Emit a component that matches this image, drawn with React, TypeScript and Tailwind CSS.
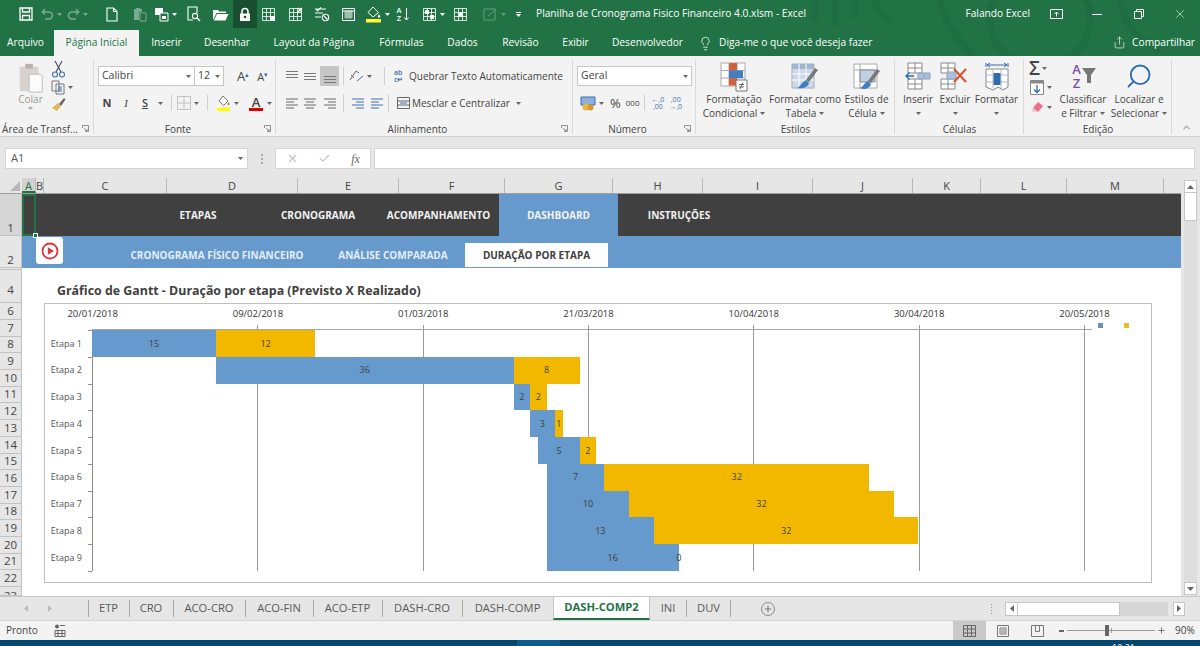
import type { ReactNode } from "react";
import { Search, X, Check, Lightbulb, Share, Plus, ChevronUp } from "lucide-react";

const PX_PER_DAY = 8.265;

const etapas = [
  { label: "Etapa 1", start: 0, prev: 15, real: 12 },
  { label: "Etapa 2", start: 15, prev: 36, real: 8 },
  { label: "Etapa 3", start: 51, prev: 2, real: 2 },
  { label: "Etapa 4", start: 53, prev: 3, real: 1 },
  { label: "Etapa 5", start: 54, prev: 5, real: 2 },
  { label: "Etapa 6", start: 55, prev: 7, real: 32 },
  { label: "Etapa 7", start: 55, prev: 10, real: 32 },
  { label: "Etapa 8", start: 55, prev: 13, real: 32 },
  { label: "Etapa 9", start: 55, prev: 16, real: 0 },
];

const datas = ["20/01/2018", "09/02/2018", "01/03/2018", "21/03/2018", "10/04/2018", "30/04/2018", "20/05/2018"];

function Caret({ className = "text-[#666]" }: { className?: string }) {
  return (
    <svg width="5" height="3" viewBox="0 0 5 3" className={className}>
      <path d="M0 0h5L2.5 3z" fill="currentColor" />
    </svg>
  );
}

function Launcher() {
  return (
    <svg width="7" height="7" viewBox="0 0 7 7" className="text-[#777]">
      <path d="M.5 3V.5h6v6H3.5M2 3l3 3M5 4v2H3" fill="none" stroke="currentColor" strokeWidth=".8" />
    </svg>
  );
}

function Slot({ w, children, className = "" }: { w: string; children: ReactNode; className?: string }) {
  return <div className={`${w} h-full flex items-center justify-center gap-[3px] ${className}`}>{children}</div>;
}

function SheetIco({ children }: { children?: ReactNode }) {
  return (
    <svg width="15" height="15" viewBox="0 0 15 15" fill="none" stroke="#fff" strokeWidth="1">
      <path d="M1.5 1.5h12v12h-12zM1.5 5.5h12M1.5 9.5h12M5.5 1.5v12M9.5 1.5v12" opacity=".8" />
      {children}
    </svg>
  );
}

function TitleBar() {
  return (
    <div className="relative h-[28px] flex items-center pl-[14px] text-white text-[10.2px]">
      <Slot w="w-[24px]">
        <svg width="14" height="14" viewBox="0 0 14 14" fill="none" stroke="#fff" strokeWidth="1.3">
          <path d="M1 1h12v12H1zM3.5 1v4h7V1M3.5 13V8.5h7V13" />
        </svg>
      </Slot>
      <Slot w="w-[26px]" className="opacity-40">
        <svg width="13" height="12" viewBox="0 0 13 12" fill="none" stroke="#fff" strokeWidth="1.4">
          <path d="M4 1 1.2 4 4 6.5M1.5 4H8a3.5 3.5 0 0 1 0 7H4" />
        </svg>
        <Caret className="text-white" />
      </Slot>
      <Slot w="w-[26px]" className="opacity-40">
        <svg width="13" height="12" viewBox="0 0 13 12" fill="none" stroke="#fff" strokeWidth="1.4">
          <path d="M9 1l2.8 3L9 6.5M11.5 4H5a3.5 3.5 0 0 0 0 7h4" />
        </svg>
        <Caret className="text-white" />
      </Slot>
      <Slot w="w-[24px]" className="ml-[10px]">
        <svg width="12" height="15" viewBox="0 0 12 15" fill="none" stroke="#fff" strokeWidth="1.1">
          <path d="M1 1h6.5L11 4.5V14H1zM7.5 1v3.5H11" />
        </svg>
      </Slot>
      <Slot w="w-[20px]" className="ml-[6px] opacity-40">
        <svg width="14" height="15" viewBox="0 0 14 15" fill="#fff">
          <path d="M1 2h2V1h4v1h2v3H6v8H1z" />
          <path d="M7 6h6v8H7z" fill="none" stroke="#fff" />
        </svg>
      </Slot>
      <Slot w="w-[25px]" className="ml-[3px]">
        <svg width="15" height="15" viewBox="0 0 15 15">
          <path d="M1 1h8v7H1z" fill="#fff" />
          <path d="M6 6h8v8H6z" fill="#217346" stroke="#fff" />
          <path d="M8 9h4v3H8z" fill="#fff" />
        </svg>
        <Caret className="text-white" />
      </Slot>
      <Slot w="w-[24px]" className="ml-[3px]">
        <svg width="15" height="16" viewBox="0 0 15 16" fill="none" stroke="#fff" strokeWidth="1.1">
          <path d="M11 7V1H2v13h5" />
          <circle cx="9" cy="10" r="2.6" />
          <path d="M11 12l3 3" strokeWidth="1.6" />
        </svg>
      </Slot>
      <Slot w="w-[24px]" className="ml-[3px]">
        <svg width="17" height="13" viewBox="0 0 17 13" fill="#fff">
          <path d="M1 2h5l1.5 1.5H14V5H4.5L1 12z" />
          <path d="M5 6h11.5L13.500 12.500H1.8z" />
        </svg>
      </Slot>
      <Slot w="w-[24px]" className="ml-[1px] bg-[#174f30]">
        <svg width="12" height="15" viewBox="0 0 12 15">
          <path d="M3 7V4.500a3 3 0 0 1 6 0V7" fill="none" stroke="#fff" strokeWidth="1.6" />
          <path d="M1 6.500h10V14H1z" fill="#fff" />
          <circle cx="6" cy="10" r="1.300" fill="#174f30" />
        </svg>
      </Slot>
      <Slot w="w-[23px]">
        <SheetIco>
          <path d="M9 9h5v5H9z" fill="#fff" stroke="none" />
        </SheetIco>
      </Slot>
      <Slot w="w-[24px]" className="ml-[3px]">
        <SheetIco>
          <path d="M10 1l4 4M14 1l-4 4" strokeWidth="1.3" />
        </SheetIco>
      </Slot>
      <Slot w="w-[24px]" className="ml-[3px]">
        <svg width="16" height="15" viewBox="0 0 16 15" fill="none" stroke="#fff" strokeWidth="1.1">
          <path d="M1 2h11M1 6h8M1 10h6M2 2l1.5 2L7 .5" />
          <circle cx="11.5" cy="10.5" r="3.2" />
          <path d="M9.5 8.5l4 4" />
        </svg>
      </Slot>
      <Slot w="w-[24px]" className="ml-[2px]">
        <svg width="15" height="15" viewBox="0 0 15 15" fill="none" stroke="#fff">
          <path d="M1.5 1.5h12v12h-12z" />
          <path d="M4 4h7v7H4z" fill="#fff" opacity=".55" />
          <path d="M1.5 4h12" />
        </svg>
      </Slot>
      <Slot w="w-[29px]" className="ml-[3px]">
        <svg width="17" height="17" viewBox="0 0 17 17">
          <path d="M8 1l5.500 5.500L8 11 3 6.500z" fill="none" stroke="#fff" />
          <path d="M14 8l1.200 2.400a1.200 1.200 0 1 1-2.400 0z" fill="#fff" />
          <path d="M1 13h15v3.500H1z" fill="#ffff3c" />
        </svg>
        <Caret className="text-white" />
      </Slot>
      <Slot w="w-[22px]">
        <span className="text-[7.5px] leading-[8px] font-semibold text-center">A<br />Z</span>
        <svg width="5" height="13" viewBox="0 0 5 13" fill="none" stroke="#fff">
          <path d="M2.500 0v12M.5 9.500l2 2.500 2-2.500" />
        </svg>
      </Slot>
      <Slot w="w-[30px]" className="ml-[4px]">
        <SheetIco>
          <path d="M3 3h4v4H3zM8 8h4v4H8z" fill="#fff" stroke="none" />
        </SheetIco>
        <Caret className="text-white" />
      </Slot>
      <Slot w="w-[24px]">
        <SheetIco>
          <path d="M5.500 5.500h4v4h-4z" fill="#fff" stroke="none" />
        </SheetIco>
      </Slot>
      <Slot w="w-[32px]" className="ml-[6px] opacity-30">
        <svg width="15" height="13" viewBox="0 0 15 13" fill="none" stroke="#fff">
          <path d="M1 1h11v11H1zM5 8l8-7" />
        </svg>
        <Caret className="text-white" />
      </Slot>
      <Slot w="w-[16px]">
        <div className="flex flex-col items-center gap-[1px]">
          <div className="w-[5px] h-px bg-white" />
          <Caret className="text-white" />
        </div>
      </Slot>
      <span className="ml-[10px] whitespace-nowrap">Planilha de Cronograma Fisico Financeiro 4.0.xlsm  -  Excel</span>
      <div className="ml-auto flex items-center h-full">
        <span className="mr-[7px]">Falando Excel</span>
        <Slot w="w-[39px]">
          <svg width="13" height="10" viewBox="0 0 13 10" fill="none" stroke="#fff">
            <path d="M.5.5h12v9H.5zM6.500 7.500V3M4.500 5l2-2 2 2" />
          </svg>
        </Slot>
        <Slot w="w-[42px]">
          <div className="w-[10px] h-px bg-white" />
        </Slot>
        <Slot w="w-[42px]">
          <svg width="10" height="10" viewBox="0 0 10 10" fill="none" stroke="#fff">
            <path d="M.5 2.500h7v7h-7zM2.500 2.500v-2h7v7h-2" />
          </svg>
        </Slot>
        <Slot w="w-[40px]">
          <X size={14} strokeWidth={1} className="text-white" />
        </Slot>
      </div>
    </div>
  );
}

function TabsRow() {
  return (
    <div className="relative h-[28px] flex items-center pt-[2px] text-[10.2px] text-white">
      <div className="w-[51px] mr-[3px] text-center">Arquivo</div>
      <div className="w-[85px] h-[26px] -mb-[0px] self-end bg-[#f3f3f3] text-[#217346] flex items-center justify-center">Página Inicial</div>
      <div className="w-[55px] text-center">Inserir</div>
      <div className="w-[66px] text-center">Desenhar</div>
      <div className="w-[108px] text-center">Layout da Página</div>
      <div className="w-[67px] text-center">Fórmulas</div>
      <div className="w-[55px] text-center">Dados</div>
      <div className="w-[61px] text-center">Revisão</div>
      <div className="w-[49px] text-center">Exibir</div>
      <div className="w-[95px] text-center">Desenvolvedor</div>
      <Lightbulb size={15} strokeWidth={1.2} className="ml-[3px] text-white" />
      <span className="ml-[6px] whitespace-nowrap">Diga-me o que você deseja fazer</span>
      <div className="ml-auto mr-[5px] flex items-center gap-[6px]">
        <Share size={13} strokeWidth={1.2} />
        <span>Compartilhar</span>
      </div>
    </div>
  );
}

function Group({ w, label, launcher, children }: { w: string; label: string; launcher?: boolean; children: ReactNode }) {
  return (
    <div className={`${w} h-full relative flex flex-col shrink-0 after:absolute after:right-0 after:top-[4px] after:bottom-[2px] after:w-px after:bg-[#d9d9d9]`}>
      <div className="flex-1 min-h-0">{children}</div>
      <div className={`h-[13px] flex items-center justify-center text-[10px] text-[#444] whitespace-nowrap relative ${launcher ? "pr-[14px]" : ""}`}>
        {label}
        {launcher && (
          <span className="absolute right-[5px] top-[2px]">
            <Launcher />
          </span>
        )}
      </div>
    </div>
  );
}

function Lines({ align, stroke = "#666" }: { align: "l" | "c" | "r"; stroke?: string }) {
  const d =
    align === "l"
      ? "M1 2h12M1 5h8M1 8h12M1 11h8"
      : align === "c"
        ? "M1 2h12M3 5h8M1 8h12M3 11h8"
        : "M1 2h12M5 5h8M1 8h12M5 11h8";
  return (
    <svg width="14" height="13" viewBox="0 0 14 13" fill="none" stroke={stroke}>
      <path d={d} />
    </svg>
  );
}

function VLines({ pos }: { pos: "t" | "m" | "b" }) {
  const y = pos === "t" ? 1.5 : pos === "m" ? 3.5 : 6.5;
  return (
    <svg width="14" height="13" viewBox="0 0 14 13" fill="none" stroke="#777">
      <path d={`M1 ${y}h12M1 ${y + 3}h12M1 ${y + 6}h12`} />
    </svg>
  );
}

function Select({ w, text }: { w: string; text: string }) {
  return (
    <div className={`${w} h-[20px] bg-white border border-[#c6c6c6] flex items-center justify-between px-[3px] text-[10.5px] text-[#444]`}>
      <span>{text}</span>
      <Caret />
    </div>
  );
}

function BigButton({ w, icon, lines }: { w: string; icon: ReactNode; lines: ReactNode[] }) {
  return (
    <div className={`${w} shrink-0 flex flex-col items-center pt-[6px]`}>
      <div className="h-[30px] flex items-start justify-center">{icon}</div>
      {lines.map((l, i) => (
        <div key={i} className="h-[14px] flex items-center gap-[3px] text-[10px] text-[#444] whitespace-nowrap">
          {l}
        </div>
      ))}
    </div>
  );
}

function Ribbon() {
  return (
    <div className="h-[81px] bg-[#f3f3f3] border-b border-[#d2d2d2] flex relative">
      <Group w="w-[94px]" label="Área de Transf..." launcher>
        <div className="flex h-full">
          <div className="w-[50px] flex flex-col items-center pt-[6px] pl-[11px]">
            <svg width="26" height="31" viewBox="0 0 26 33">
              <path d="M1 5h20v26H1z" fill="#d9d3cf" />
              <path d="M7 2h8v5H7z" fill="#b9b1ad" />
              <path d="M11 13h12l2 2v17H11z" fill="#fbfbfb" stroke="#bbb" />
            </svg>
            <span className="text-[10px] leading-[13px] text-[#999]">Colar</span>
            <Caret className="text-[#aaa] mt-[1px]" />
          </div>
          <div className="flex flex-col items-start pl-[1px] pt-[4px] gap-[2px]">
            <svg width="15" height="18" viewBox="0 0 15 18" fill="none" stroke="#446" strokeWidth="1.1">
              <path d="M4 1l6 11M11 1L5 12" />
              <circle cx="4" cy="14.5" r="2.5" stroke="#3a6fb0" />
              <circle cx="11" cy="14.5" r="2.5" stroke="#3a6fb0" />
            </svg>
            <div className="flex items-center gap-[3px]">
              <svg width="14" height="15" viewBox="0 0 14 15" fill="none" stroke="#777">
                <path d="M1 1h7v10H1zM5 4h8v10H5z" fill="#f3f3f3" />
                <path d="M7 7h4M7 9h4M7 11h4" stroke="#3a6fb0" />
              </svg>
              <Caret />
            </div>
            <svg width="15" height="15" viewBox="0 0 15 15">
              <path d="M8 7l5-6 1.500 1.500L10 9z" fill="#666" />
              <path d="M1 11l6-5 3 3-4 5z" fill="#e0b65a" />
            </svg>
          </div>
        </div>
      </Group>

      <Group w="w-[182px]" label="Fonte" launcher>
        <div className="pt-[10px] pl-[4px]">
          <div className="flex items-center h-[20px] text-[#444]">
            <Select w="w-[97px]" text="Calibri" />
            <Select w="w-[30px] -ml-px" text="12" />
            <span className="ml-[13px] text-[13px] leading-none">A<sup className="text-[7px] text-[#3a6fb0]">▴</sup></span>
            <span className="ml-[8px] text-[11px] leading-none">A<sup className="text-[7px] text-[#3a6fb0]">▾</sup></span>
          </div>
          <div className="flex items-center h-[20px] mt-[7px] text-[11px] text-[#444]">
            <span className="w-[18px] text-center font-bold">N</span>
            <span className="w-[20px] text-center italic font-['Liberation_Serif',serif]">I</span>
            <span className="w-[18px] text-center underline font-semibold">S</span>
            <span className="w-[12px] flex justify-center"><Caret /></span>
            <div className="w-px h-[16px] bg-[#d0d0d0] mx-[5px]" />
            <svg width="14" height="14" viewBox="0 0 14 14" fill="none" stroke="#999" strokeDasharray="1 1">
              <path d="M.5.5h13v13H.5zM.5 7h13M7 .5v13" />
            </svg>
            <span className="ml-[3px]"><Caret /></span>
            <div className="w-px h-[16px] bg-[#d0d0d0] mx-[8px]" />
            <svg width="15" height="16" viewBox="0 0 15 16">
              <path d="M7 1l5 5-4.500 4.500L3 6z" fill="#fff" stroke="#777" />
              <path d="M12.500 7l1 2a1 1 0 1 1-2 0z" fill="#777" />
              <path d="M1 12.500h13V16H1z" fill="#ffff00" />
            </svg>
            <span className="ml-[3px]"><Caret /></span>
            <div className="ml-[10px] w-[14px] flex flex-col items-center">
              <span className="text-[13px] leading-[12px] font-semibold">A</span>
              <div className="w-[14px] h-[3px] bg-[#e00000]" />
            </div>
            <span className="ml-[4px]"><Caret /></span>
          </div>
        </div>
      </Group>

      <Group w="w-[297px]" label="Alinhamento" launcher>
        <div className="pt-[10px] pl-[7px] text-[10px] text-[#444]">
          <div className="flex items-center h-[20px]">
            <div className="w-[18px] flex justify-center"><VLines pos="t" /></div>
            <div className="w-[18px] flex justify-center"><VLines pos="m" /></div>
            <div className="ml-[1px] w-[19px] h-[20px] bg-[#c6c6c6] flex justify-center items-center"><VLines pos="b" /></div>
            <div className="w-px h-[18px] bg-[#d0d0d0] ml-[4px] mr-[2px]" />
            <svg width="16" height="14" viewBox="0 0 16 14" fill="none" stroke="#666" className="ml-[2px]">
              <path d="M2 11L8 2l3 2M3 6l3 3" />
              <path d="M9 12l6-5" stroke="#3a6fb0" />
            </svg>
            <span className="ml-[3px]"><Caret /></span>
            <div className="w-px h-[18px] bg-[#d0d0d0] ml-[12px]" />
            <span className="ml-[9px] w-[12px] text-[7px] leading-[7px] text-[#3a6fb0] font-semibold whitespace-nowrap">ab<br />c↵</span>
            <span className="ml-[3px] whitespace-nowrap">Quebrar Texto Automaticamente</span>
          </div>
          <div className="flex items-center h-[20px] mt-[7px]">
            <div className="w-[18px] flex justify-center"><Lines align="l" /></div>
            <div className="w-[18px] flex justify-center"><Lines align="c" /></div>
            <div className="ml-[1px] w-[19px] flex justify-center"><Lines align="r" /></div>
            <div className="w-px h-[18px] bg-[#d0d0d0] ml-[4px] mr-[4px]" />
            <div className="w-[19px] flex justify-center"><Lines align="r" stroke="#3a6fb0" /></div>
            <div className="w-[19px] flex justify-center"><Lines align="l" stroke="#3a6fb0" /></div>
            <div className="w-px h-[18px] bg-[#d0d0d0] ml-[2px]" />
            <svg width="13" height="12" viewBox="0 0 13 12" fill="none" stroke="#666" className="ml-[8px]">
              <path d="M.5.5h12v11H.5zM.5 4h12M.5 8h12" />
              <path d="M3 6h7" stroke="#3a6fb0" />
            </svg>
            <span className="ml-[2px] whitespace-nowrap">Mesclar e Centralizar</span>
            <span className="ml-[6px]"><Caret /></span>
          </div>
        </div>
      </Group>

      <Group w="w-[123px]" label="Número" launcher>
        <div className="pt-[10px] pl-[4px] text-[#444]">
          <Select w="w-[115px]" text="Geral" />
          <div className="flex items-center h-[20px] mt-[7px]">
            <svg width="16" height="15" viewBox="0 0 16 15" className="ml-[3px]">
              <path d="M1 1h14v8H1z" fill="#8fb1d8" stroke="#3a6fb0" />
              <circle cx="6" cy="11" r="3.500" fill="#e8b64c" />
              <circle cx="10.500" cy="11.500" r="3" fill="#d89a30" />
            </svg>
            <span className="ml-[3px]"><Caret /></span>
            <span className="ml-[6px] text-[13px] leading-none">%</span>
            <span className="ml-[5px] text-[8px]">000</span>
            <div className="w-px h-[16px] bg-[#d0d0d0] ml-[5px]" />
            <span className="ml-[6px] text-[7px] leading-[7px] text-[#3a6fb0] text-center">←,0<br />,00</span>
            <span className="ml-[5px] text-[7px] leading-[7px] text-[#3a6fb0] text-center">,00<br />→,0</span>
          </div>
        </div>
      </Group>

      <Group w="w-[199px]" label="Estilos">
        <div className="flex">
          <BigButton
            w="w-[76px]"
            lines={["Formatação", <>Condicional <Caret key="c" /></>]}
            icon={
              <svg width="28" height="30" viewBox="0 0 28 30" fill="none">
                <path d="M1 1h24v23H1zM9 1v23M17 1v23M1 8.500h24M1 16h24" stroke="#aaa" fill="#fff" />
                <path d="M9 1h8v7.500H9z" fill="#d2603c" />
                <path d="M9 8.500h14V16H9z" fill="#3f7fc1" />
                <path d="M9 16h8v7.500H9z" fill="#d2603c" />
                <path d="M16 18h11v11H16z" fill="#fff" stroke="#777" />
                <path d="M19 22.500h5M19 25h5M23 20.500l-3 6.500" stroke="#444" strokeWidth=".8" />
              </svg>
            }
          />
          <BigButton
            w="w-[66px]"
            lines={["Formatar como", <>Tabela <Caret key="c" /></>]}
            icon={
              <svg width="28" height="30" viewBox="0 0 28 30" fill="none">
                <path d="M1 2h22v24H1z" fill="#cdd9e8" stroke="#aaa" />
                <path d="M1 2h22v5H1z" fill="#9fb6d2" />
                <path d="M1 12h22M1 18h22M8 2v24M15 2v24" stroke="#fff" />
                <path d="M27 8l-9 12-3-2 9-12z" fill="#777" />
                <path d="M15 18l3 3c-1 5-8 6-12 5 3-1 4-5 9-8z" fill="#3f7fc1" />
              </svg>
            }
          />
          <BigButton
            w="w-[57px]"
            lines={["Estilos de", <>Célula <Caret key="c" /></>]}
            icon={
              <svg width="28" height="30" viewBox="0 0 28 30" fill="none">
                <path d="M1 2h23v24H1zM7 2v24M1 8h23" stroke="#aaa" fill="#fff" />
                <path d="M7 8h15v12H7z" fill="#bfd0e5" stroke="#888" />
                <path d="M27 9l-9 12-3-2 9-12z" fill="#777" />
                <path d="M15 19l3 3c-1 5-8 6-11 4 3-1 3-4 8-7z" fill="#3f7fc1" />
              </svg>
            }
          />
        </div>
      </Group>

      <Group w="w-[129px]" label="Células">
        <div className="flex">
          <BigButton
            w="w-[46px]"
            lines={["Inserir", <Caret key="c" />]}
            icon={
              <svg width="26" height="28" viewBox="0 0 26 28" fill="none">
                <path d="M3 1h14v10H3zM3 6h14M10 1v10M3 17h14v10H3zM3 22h14M10 17v10" stroke="#888" fill="#fff" />
                <path d="M13 11h12v6H13zM19 11v6" fill="#a8c0dc" stroke="#8aa5c5" />
                <path d="M1 14h8M4.500 10.500 1 14l3.500 3.500" stroke="#2d6cb0" strokeWidth="1.4" />
              </svg>
            }
          />
          <BigButton
            w="w-[28px]"
            lines={["Excluir", <Caret key="c" />]}
            icon={
              <svg width="30" height="28" viewBox="0 0 30 28" fill="none" className="-ml-[2px]">
                <path d="M2 1h14v10H2zM2 6h14M9 1v10M2 17h14v10H2zM2 22h14M9 17v10" stroke="#888" fill="#fff" />
                <path d="M8 10h9v7H8z" fill="#a8c0dc" stroke="#8aa5c5" />
                <path d="M15 7l12 13M27 7L15 20" stroke="#d9512c" strokeWidth="2" />
              </svg>
            }
          />
          <BigButton
            w="w-[55px]"
            lines={["Formatar", <Caret key="c" />]}
            icon={
              <svg width="26" height="30" viewBox="0 0 26 30" fill="none">
                <path d="M2 7h22v18l-5 3-5-3-5 3-7-3z" stroke="#888" fill="#fff" />
                <path d="M9 7v19M17 7v19M2 13h22M2 20h22" stroke="#bbb" />
                <path d="M9.500 11h7v12h-7z" fill="#2d6cb0" />
                <path d="M2 1v4M24 1v4M3 3h20M6 1 3 3l3 2M20 1l3 2-3 2" stroke="#2d6cb0" />
              </svg>
            }
          />
        </div>
      </Group>

      <Group w="w-[148px]" label="Edição">
        <div className="flex">
          <div className="w-[28px] pt-[4px] pl-[5px] flex flex-col gap-[3px]">
            <div className="h-[16px] flex items-center gap-[2px]">
              <span className="text-[19px] leading-none font-semibold text-[#444]">Σ</span>
              <Caret />
            </div>
            <div className="h-[16px] flex items-center gap-[3px] pl-[1px]">
              <svg width="14" height="15" viewBox="0 0 14 15" fill="none">
                <path d="M.5.500h13v14H.5z" stroke="#888" fill="#fff" />
                <path d="M.5.500h13v3H.5z" fill="#888" />
                <path d="M7 5v7M4 9.500l3 3 3-3" stroke="#2d6cb0" strokeWidth="1.3" />
              </svg>
              <Caret />
            </div>
            <div className="h-[16px] flex items-center gap-[3px] mt-[1px] pl-[1px]">
              <svg width="14" height="12" viewBox="0 0 14 12">
                <path d="M8 1l5 4-5 6-5-4z" fill="#ef6f86" />
                <path d="M3 7l3.500 3-1 1H3L1 9z" fill="#f6c8d0" />
              </svg>
              <Caret />
            </div>
          </div>
          <BigButton
            w="w-[62px]"
            lines={["Classificar", <>e Filtrar <Caret key="c" /></>]}
            icon={
              <div className="flex items-start ml-[3px]">
                <span className="text-[13px] leading-[14px] font-semibold text-center text-[#7a4fa3]">A<br />Z</span>
                <svg width="16" height="22" viewBox="0 0 16 22" className="mt-[4px]">
                  <path d="M1 2h14L10 9v8H6V9z" fill="#777" />
                </svg>
              </div>
            }
          />
          <BigButton
            w="w-[50px]"
            lines={["Localizar e", <>Selecionar <Caret key="c" /></>]}
            icon={<Search size={28} strokeWidth={1.6} className="text-[#2d6cb0] -scale-x-100" />}
          />
        </div>
      </Group>

      <ChevronUp size={11} className="absolute right-[8px] bottom-[3px] text-[#666]" />
    </div>
  );
}

function FormulaBar() {
  return (
    <div className="h-[41px] flex items-center pl-[5px] pr-[5px] pt-[2px]">
      <div className="w-[243px] h-[21px] bg-white border border-[#d4d4d4] flex items-center justify-between pl-[5px] pr-[4px] text-[11px] text-[#555]">
        <span>A1</span>
        <Caret />
      </div>
      <div className="w-[27px] flex flex-col items-center gap-[2px]">
        <div className="w-[2px] h-[2px] bg-[#aaa]" />
        <div className="w-[2px] h-[2px] bg-[#aaa]" />
        <div className="w-[2px] h-[2px] bg-[#aaa]" />
      </div>
      <div className="w-[96px] h-[21px] bg-white border border-[#d4d4d4] flex items-center text-[#c4c4c4]">
        <div className="w-[32px] flex justify-center"><X size={13} /></div>
        <div className="w-[33px] flex justify-center"><Check size={13} /></div>
        <div className="w-[29px] text-center text-[12px] italic text-[#666] font-['Liberation_Serif',serif]">fx</div>
      </div>
      <div className="flex-1 h-[21px] ml-[3px] bg-white border border-[#d4d4d4]" />
    </div>
  );
}

const colunas = [
  { l: "A", w: "w-[14px]", sel: true },
  { l: "B", w: "w-[8px]" },
  { l: "C", w: "w-[123px]" },
  { l: "D", w: "w-[131px]" },
  { l: "E", w: "w-[101px]" },
  { l: "F", w: "w-[106px]" },
  { l: "G", w: "w-[108px]" },
  { l: "H", w: "w-[90px]" },
  { l: "I", w: "w-[110px]" },
  { l: "J", w: "w-[100px]" },
  { l: "K", w: "w-[68px]" },
  { l: "L", w: "w-[86px]" },
  { l: "M", w: "w-[97px]" },
];

function ColumnHeader() {
  return (
    <div className="h-[16px] flex border-b border-[#9f9f9f] text-[11px] text-[#444] leading-[15px]">
      <div className="w-[22px] flex items-end justify-end pr-[2px] pb-[2px]">
        <svg width="10" height="10" viewBox="0 0 10 10">
          <path d="M10 0v10H0z" fill="#b8b8b8" />
        </svg>
      </div>
      {colunas.map((c) => (
        <div key={c.l} className={`${c.w} text-center border-r border-[#b9b9b9] ${c.sel ? "bg-[#d2d2d2] border-b-2 border-b-[#217346] text-[#217346]" : ""}`}>
          {c.l}
        </div>
      ))}
    </div>
  );
}

const linhas = [
  { l: "1", h: "h-[42px] items-end leading-[14px] bg-[#d6d6d6]" },
  { l: "2", h: "h-[32px] items-end leading-[14px]" },
  { l: "", h: "h-[2px]" },
  { l: "4", h: "h-[33px] items-end pb-[4px] leading-[16px]" },
  { l: "6", h: "h-[17px] items-end leading-[16px]" },
  ...["7", "8", "9", "10", "11", "12", "13", "14", "15", "16", "17", "18", "19", "20", "21", "22"].map((l) => ({
    l,
    h: "h-[16.7px] items-end leading-[16px]",
  })),
  { l: "23", h: "h-[9px] items-start pt-[1px] leading-[16px]" },
];

function RowHeader() {
  return (
    <div className="w-[22px] shrink-0 overflow-hidden">
      {linhas.map((r, i) => (
        <div key={i} className={`${r.h} flex justify-center overflow-hidden border-b border-r border-[#c2c2c2] text-[11.5px] text-[#444]`}>
          {r.l}
        </div>
      ))}
    </div>
  );
}

function Gantt() {
  const grades = [1, 2, 3, 4, 5, 6];
  return (
    <div className="relative ml-[22px] w-[1108px] h-[280px] border border-[#bfbfbf] bg-white">
      <div className="flex h-[21px] items-center -ml-[35px] text-[9.5px] text-[#333]">
        {datas.map((d) => (
          <div key={d} className="w-[165.3px] shrink-0 text-center">
            {d}
          </div>
        ))}
      </div>
      <div className="absolute left-[1053px] top-[19px] w-[5px] h-[5px] bg-[#6b8fc0]" />
      <div className="absolute left-[1079px] top-[19px] w-[5px] h-[5px] bg-[#e9bd2f]" />
      <div className="relative mt-[5px] h-[241px]">
        <div className="absolute left-[47px] -top-px w-[1000px] h-px bg-[#a6a6a6]" />
        <div className="absolute left-[47px] top-0 w-px h-full bg-[#8c8c8c]" />
        {grades.map((g) => (
          <div key={g} className="absolute -top-[5px] bottom-0 w-px bg-[#9a9a9a]" style={{ left: 47 + g * 165.3 }} />
        ))}
        {Array.from({ length: 10 }, (_, i) => (
          <div key={i} className="absolute left-[43px] w-[4px] h-px bg-[#8c8c8c]" style={{ top: i * 26.78 }} />
        ))}
        {etapas.map((e) => (
          <div key={e.label} className="relative h-[26.78px] flex items-center text-[9px] text-[#404040]">
            <div className="w-[37px] text-right text-[#555] whitespace-nowrap">{e.label}</div>
            <div className="h-full flex" style={{ marginLeft: 10 + e.start * PX_PER_DAY }}>
              <div className="h-full bg-[#6699cc] flex items-center justify-center" style={{ width: e.prev * PX_PER_DAY }}>
                {e.prev}
              </div>
              <div className="h-full bg-[#f2b800] flex items-center justify-center" style={{ width: e.real * PX_PER_DAY }}>
                {e.real}
              </div>
            </div>
          </div>
        ))}
      </div>
    </div>
  );
}

function Sheet() {
  return (
    <div className="relative flex-1 bg-white overflow-hidden">
      <div className="h-[42px] bg-[#404040] flex text-[10px] font-bold text-[#f2f2f2]">
        <div className="w-[116px]" />
        <div className="w-[120px] flex items-center justify-center">ETAPAS</div>
        <div className="w-[120px] flex items-center justify-center">CRONOGRAMA</div>
        <div className="w-[121px] flex items-center justify-center">ACOMPANHAMENTO</div>
        <div className="w-[119px] bg-[#6699cc] flex items-center justify-center">DASHBOARD</div>
        <div className="w-[122px] flex items-center justify-center">INSTRUÇÕES</div>
      </div>
      <div className="h-[32px] bg-[#6699cc] flex text-[10px] font-bold text-[#e3edf7]">
        <div className="w-[88px]" />
        <div className="w-[214px] mt-[7px] flex items-center justify-center">CRONOGRAMA FÍSICO FINANCEIRO</div>
        <div className="w-[138px] mt-[7px] flex items-center justify-center">ANÁLISE COMPARADA</div>
        <div className="w-[143px] ml-[3px] mt-[7px] mb-[1px] bg-white text-[#404040] flex items-center justify-center">DURAÇÃO POR ETAPA</div>
      </div>
      <div className="h-[35px] pl-[35px] pt-[14px] text-[12.4px] leading-[18px] font-bold text-[#404040]">
        Gráfico de Gantt - Duração por etapa (Previsto X Realizado)
      </div>
      <Gantt />

      {/* selecao da celula A1 */}
      <div className="absolute left-0 top-0 w-[14px] h-[42px] border-2 border-[#217346]" />
      <div className="absolute left-[11px] top-[39px] w-[5px] h-[5px] bg-[#217346] border border-white" />
      {/* botao de video */}
      <div className="absolute left-[14px] top-[43px] w-[27px] h-[27px] bg-white rounded-[3px] flex items-center justify-center">
        <svg width="18" height="18" viewBox="0 0 18 18" fill="none">
          <circle cx="9" cy="9" r="7.500" stroke="#e0353a" strokeWidth="1.8" />
          <path d="M6.800 5.200 13 9l-6.200 3.800z" fill="#e0353a" />
        </svg>
      </div>
    </div>
  );
}

function VScroll() {
  return (
    <div className="w-[19px] shrink-0 pl-[3px] pr-[3px] pt-[2px] pb-[1px] flex flex-col">
      <div className="h-[13px] bg-white border border-[#c6c6c6] flex items-center justify-center">
        <svg width="7" height="4" viewBox="0 0 7 4"><path d="M0 4h7L3.500 0z" fill="#666" /></svg>
      </div>
      <div className="flex-1 bg-[#dedede] flex flex-col">
        <div className="h-[28px] bg-white border-x border-b border-[#c6c6c6]" />
      </div>
      <div className="h-[13px] bg-white border border-[#c6c6c6] flex items-center justify-center">
        <svg width="7" height="4" viewBox="0 0 7 4"><path d="M0 0h7L3.500 4z" fill="#666" /></svg>
      </div>
    </div>
  );
}

const abas = [
  { t: "ETP", w: "w-[41px]" },
  { t: "CRO", w: "w-[44px]" },
  { t: "ACO-CRO", w: "w-[72px]" },
  { t: "ACO-FIN", w: "w-[68px]" },
  { t: "ACO-ETP", w: "w-[69px]" },
  { t: "DASH-CRO", w: "w-[80px]" },
  { t: "DASH-COMP", w: "w-[91px]" },
];

function SheetTabs() {
  return (
    <div className="h-[24px] bg-[#e6e6e6] border-t border-[#c6c6c6] flex items-stretch text-[11.2px] text-[#595959]">
      <div className="w-[88px] flex items-center text-[#bdbdbd]">
        <svg width="4" height="7" viewBox="0 0 4 7" className="ml-[24px]"><path d="M4 0v7L0 3.500z" fill="currentColor" /></svg>
        <svg width="4" height="7" viewBox="0 0 4 7" className="ml-[20px]"><path d="M0 0v7l4-3.500z" fill="currentColor" /></svg>
      </div>
      {abas.map((a) => (
        <div key={a.t} className={`${a.w} flex items-center justify-center relative`}>
          <div className="absolute left-0 top-[3px] bottom-[3px] w-px bg-[#a8a8a8]" />
          {a.t}
        </div>
      ))}
      <div className="w-[97px] bg-white border-x border-[#c6c6c6] border-b-2 border-b-[#217346] flex items-center justify-center font-bold text-[#217346] whitespace-nowrap">
        DASH-COMP2
      </div>
      <div className="w-[36px] flex items-center justify-center">INI</div>
      <div className="w-[45px] flex items-center justify-center border-x border-[#a8a8a8] my-[3px]">DUV</div>
      <div className="ml-[30px] w-[14px] h-[14px] self-center rounded-full border border-[#888] flex items-center justify-center">
        <Plus size={10} strokeWidth={2} className="text-[#666]" />
      </div>
      <div className="ml-[216px] w-[2px] self-center flex flex-col gap-[2px]">
        <div className="w-px h-px bg-[#999]" />
        <div className="w-px h-px bg-[#999]" />
        <div className="w-px h-px bg-[#999]" />
        <div className="w-px h-px bg-[#999]" />
      </div>
      <div className="ml-[12px] h-[14px] self-center flex">
        <div className="w-[13px] bg-white border border-[#c6c6c6] flex items-center justify-center">
          <svg width="4" height="7" viewBox="0 0 4 7"><path d="M4 0v7L0 3.500z" fill="#666" /></svg>
        </div>
        <div className="w-[102px] bg-white border-y border-r border-[#c6c6c6]" />
        <div className="w-[48px] bg-[#d6d6d6]" />
        <div className="ml-[5px] w-[12px] bg-white border border-[#c6c6c6] flex items-center justify-center">
          <svg width="4" height="7" viewBox="0 0 4 7"><path d="M0 0v7l4-3.500z" fill="#666" /></svg>
        </div>
      </div>
    </div>
  );
}

function StatusBar() {
  return (
    <div className="h-[20px] bg-[#f3f3f3] border-t border-[#d4d4d4] flex items-center pl-[6px] text-[10px] text-[#444]">
      <span>Pronto</span>
      <svg width="12" height="13" viewBox="0 0 12 13" className="ml-[16px]" fill="none" stroke="#666">
        <circle cx="3" cy="2.500" r="2" fill="#666" stroke="none" />
        <path d="M6 1.500h5" />
        <path d="M1 6.500h10v6H1zM1 9.500h10M4 6.500v6M8 6.500v6" />
      </svg>
      <div className="ml-auto flex items-center h-full">
        <div className="w-[33px] h-full bg-[#c9c9c9] flex items-center justify-center">
          <svg width="13" height="12" viewBox="0 0 13 12" fill="none" stroke="#666">
            <path d="M.5.500h12v11H.5zM.5 4h12M.5 8h12M4.500.500v11M8.500.500v11" />
          </svg>
        </div>
        <div className="w-[34px] flex justify-center">
          <svg width="12" height="12" viewBox="0 0 12 12" fill="none" stroke="#777">
            <path d="M.5.500h11v11H.5zM3 3h6v6H3zM4 5h4M4 7h4" />
          </svg>
        </div>
        <div className="w-[34px] flex justify-center">
          <svg width="13" height="12" viewBox="0 0 13 12" fill="none" stroke="#777">
            <path d="M.5.500h12v11H.5zM4.500.500v6h4v-6" />
          </svg>
        </div>
        <div className="w-[5px] h-[2px] ml-[5px] bg-[#666]" />
        <div className="relative w-[88px] h-px ml-[3px] bg-[#9a9a9a]">
          <div className="absolute left-[38px] -top-[5px] w-[4px] h-[11px] bg-[#666]" />
          <div className="absolute left-[44px] -top-[2px] w-px h-[5px] bg-[#9a9a9a]" />
        </div>
        <Plus size={9} strokeWidth={2.4} className="ml-[2px] text-[#666]" />
        <span className="ml-[9px] mr-[3px] w-[22px] text-[10px]">90%</span>
      </div>
    </div>
  );
}

function Taskbar() {
  return (
    <div className="h-[6px] bg-[#03466f] flex overflow-hidden">
      <div className="ml-[517px] w-[43px] bg-[#0a5b8f]" />
      <div className="ml-auto mr-[65px] text-[9px] leading-[9px] mt-[3px] text-white">10:21</div>
    </div>
  );
}

export default function App() {
  return (
    <div className="w-[1200px] h-[646px] overflow-hidden bg-[#e6e6e6] font-['Open_Sans','Noto_Sans',sans-serif] flex flex-col">
      <div className="relative bg-[#217346]">
        <svg width="400" height="56" viewBox="0 0 400 56" fill="none" stroke="#1f6d42" strokeWidth="7" className="absolute left-[770px] top-0">
          <path d="M45 0v22M65 0v26M85 0v18M105 0c0 10 8 16 16 22" />
          <circle cx="270" cy="18" r="50" />
          <path d="M170 0c6 30 20 40 34 56M350 0c5 30 20 40 40 50" />
        </svg>
        <TitleBar />
        <TabsRow />
      </div>
      <Ribbon />
      <FormulaBar />
      <div className="flex h-[418px]">
        <div className="flex-1 flex flex-col min-w-0">
          <ColumnHeader />
          <div className="flex flex-1 min-h-0">
            <RowHeader />
            <Sheet />
          </div>
        </div>
        <VScroll />
      </div>
      <SheetTabs />
      <StatusBar />
      <Taskbar />
    </div>
  );
}
